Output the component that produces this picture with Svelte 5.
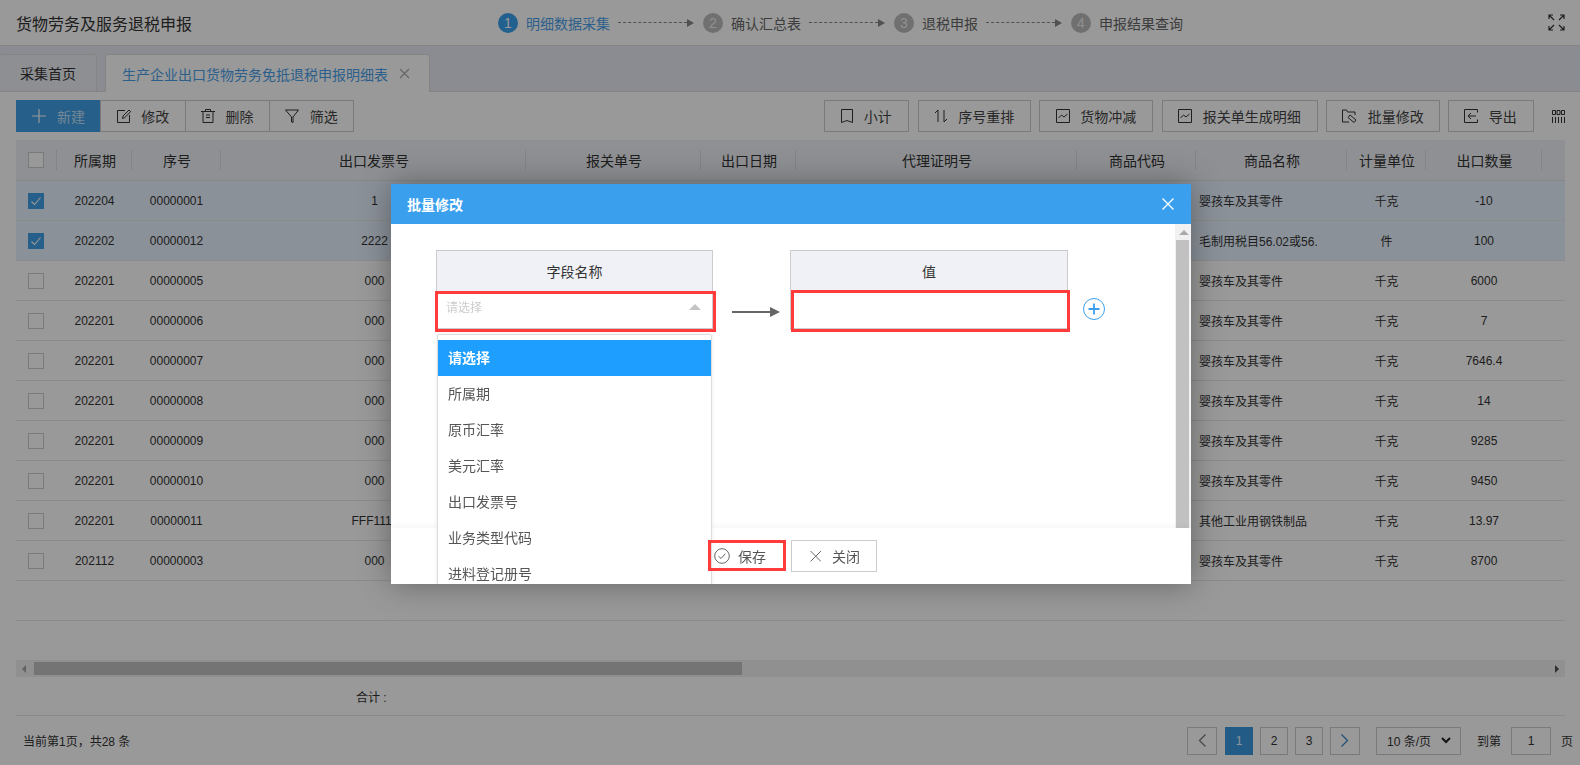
<script>
  const cols = [
    { t: '所属期' }, { t: '序号' }, { t: '出口发票号' }, { t: '报关单号' }, { t: '出口日期' },
    { t: '代理证明号' }, { t: '商品代码' }, { t: '商品名称' }, { t: '计量单位' }, { t: '出口数量' }, { t: '' }
  ];
  const rows = [
    ['202204', '00000001', '1', '婴孩车及其零件', '千克', '-10', true],
    ['202202', '00000012', '2222', '毛制用税目56.02或56.', '件', '100', true],
    ['202201', '00000005', '000', '婴孩车及其零件', '千克', '6000', false],
    ['202201', '00000006', '000', '婴孩车及其零件', '千克', '7', false],
    ['202201', '00000007', '000', '婴孩车及其零件', '千克', '7646.4', false],
    ['202201', '00000008', '000', '婴孩车及其零件', '千克', '14', false],
    ['202201', '00000009', '000', '婴孩车及其零件', '千克', '9285', false],
    ['202201', '00000010', '000', '婴孩车及其零件', '千克', '9450', false],
    ['202201', '00000011', 'FFF1111', '其他工业用钢铁制品', '千克', '13.97', false],
    ['202112', '00000003', '000', '婴孩车及其零件', '千克', '8700', false]
  ];
  const steps = [
    { n: 1, t: '明细数据采集', line: 66, on: true },
    { n: 2, t: '确认汇总表', line: 66 },
    { n: 3, t: '退税申报', line: 66 },
    { n: 4, t: '申报结果查询' }
  ];
  const options = ['所属期', '原币汇率', '美元汇率', '出口发票号', '业务类型代码', '进料登记册号'];
</script>

<div class="page">
  <header class="top">
    <div class="title">货物劳务及服务退税申报</div>
    <div class="steps">
      {#each steps as s}
        <span class="num" class:on={s.on}>{s.n}</span>
        <span class="stxt" class:on={s.on}>{s.t}</span>
        {#if s.line}
          <span class="dash"></span><span class="tri"></span>
        {/if}
      {/each}
    </div>
    <svg class="full" width="17" height="17" viewBox="0 0 17 17" fill="none" stroke="#333" stroke-width="1.2">
      <path d="M1 5V1h4M1 1l5 5M12 1h4v4M16 1l-5 5M1 12v4h4M1 16l5-5M16 12v4h-4M16 16l-5-5" />
    </svg>
  </header>

  <nav class="tabs">
    <div class="tab first">采集首页</div>
    <div class="tab active">生产企业出口货物劳务免抵退税申报明细表
      <svg class="tabx" width="11" height="11" viewBox="0 0 11 11" stroke="#aaa" stroke-width="1.2"><path d="M1 1l9 9M10 1l-9 9" /></svg>
    </div>
  </nav>

  <div class="toolbar">
    <div class="group">
      <button class="btn seg primary">
        <svg width="14" height="14" viewBox="0 0 14 14" stroke="#fff" stroke-width="1.2"><path d="M7 0v14M0 7h14" /></svg>
        新建
      </button>
      <button class="btn seg">
        <svg width="14" height="14" viewBox="0 0 14 14" fill="none" stroke="#333"><path d="M8 1.500H.5v12h12V6M5.500 9.500l.6-2.600L12 1l1.700 1.700-6 5.900z" /></svg>
        修改
      </button>
      <button class="btn seg">
        <svg width="14" height="14" viewBox="0 0 14 14" fill="none" stroke="#333"><path d="M0 2.500h14M4.500 2.500V.5h5v2M2 2.500v11h10v-11M5 6h4M5 8.500h4" /></svg>
        删除
      </button>
      <button class="btn seg">
        <svg width="14" height="14" viewBox="0 0 14 14" fill="none" stroke="#333"><path d="M.5 1h13L8 8v5.500L6.500 13V8z" /></svg>
        筛选
      </button>
    </div>
    <div class="group right">
      <button class="btn w85">
        <svg width="12" height="14" viewBox="0 0 12 14" fill="none" stroke="#333"><path d="M.5.5h11v13L6 11.500l-5.500 2z" /></svg>
        小计
      </button>
      <button class="btn w113">
        <svg width="14" height="14" viewBox="0 0 14 14" fill="none" stroke="#333"><path d="M1 4l3-3v12M10 1v12l3-3" /></svg>
        序号重排
      </button>
      <button class="btn w114">
        <svg width="14" height="14" viewBox="0 0 14 14" fill="none" stroke="#333"><path d="M.5.5h13v13H.5zM2.500 9l3-3 2.500 2 3.500-3" /></svg>
        货物冲减
      </button>
      <button class="btn w156">
        <svg width="14" height="14" viewBox="0 0 14 14" fill="none" stroke="#333"><path d="M.5.5h13v13H.5zM2.500 9l3-3 2.500 2 3.500-3" /></svg>
        报关单生成明细
      </button>
      <button class="btn w114">
        <svg width="15" height="14" viewBox="0 0 15 14" fill="none" stroke="#333"><path d="M7 13H.5V1h4l1 2H13v3M8 6l6 5-2 2.500-6-5z" /></svg>
        批量修改
      </button>
      <button class="btn w86 last">
        <svg width="14" height="14" viewBox="0 0 14 14" fill="none" stroke="#333"><path d="M13.500 3.500v-3H.5v13h13v-3M12 7H4M7 4L4 7l3 3" /></svg>
        导出
      </button>
      <svg class="gridi" width="13" height="13" viewBox="0 0 13 13" fill="none" stroke="#333"><path d="M.5.5h3v4h-3zM5 .5h3v4H5zM9.500.5h3v4h-3zM.5 7v6M3.500 7v6M6.500 7v6M9.500 7v6M12.500 7v6" /></svg>
    </div>
  </div>

  <div class="tablewrap">
    <div class="thead grid">
      <div class="cell chk"><span class="box"></span></div>
      {#each cols as c}
        <div class="cell">{c.t}</div>
      {/each}
    </div>
    {#each rows as r}
      <div class="grid row" class:sel={r[6]}>
        <div class="cell chk">
          <span class="box" class:checked={r[6]}>
            {#if r[6]}
              <svg width="12" height="12" viewBox="0 0 12 12" fill="none" stroke="#fff" stroke-width="1.1"><path d="M1.500 6.500l3 3 6-7" /></svg>
            {/if}
          </span>
        </div>
        <div class="cell">{r[0]}</div>
        <div class="cell">{r[1]}</div>
        <div class="cell shift">{r[2]}</div>
        <div class="cell"></div>
        <div class="cell"></div>
        <div class="cell"></div>
        <div class="cell"></div>
        <div class="cell left">{r[3]}</div>
        <div class="cell">{r[4]}</div>
        <div class="cell">{r[5]}</div>
        <div class="cell"></div>
      </div>
    {/each}
    <div class="grid row empty"></div>
    <div class="hscroll">
      <span class="harrow l"></span>
      <span class="hthumb"></span>
      <span class="harrow r"></span>
    </div>
    <div class="sum">合计 :</div>
  </div>

  <footer class="pager">
    <div class="count">当前第1页，共28 条</div>
    <div class="pg">
      <button class="pbtn nav"><svg width="8" height="13" viewBox="0 0 8 13" fill="none" stroke="#777" stroke-width="1.3"><path d="M7.500 .5L1.500 6.500l6 6" /></svg></button>
      <button class="pbtn cur">1</button>
      <button class="pbtn">2</button>
      <button class="pbtn">3</button>
      <button class="pbtn nav"><svg width="8" height="13" viewBox="0 0 8 13" fill="none" stroke="#3f83c9" stroke-width="1.3"><path d="M.5 .5l6 6-6 6" /></svg></button>
      <div class="sel10">10 条/页
        <svg width="10" height="7" viewBox="0 0 10 7" fill="none" stroke="#222" stroke-width="2"><path d="M1 1l4 4 4-4" /></svg>
      </div>
      <span class="goto">到第</span>
      <div class="pinput">1</div>
      <span class="pageword">页</span>
    </div>
  </footer>
</div>

<div class="mask"></div>

<section class="modal">
  <div class="mhead">
    <span>批量修改</span>
    <svg width="12" height="12" viewBox="0 0 12 12" stroke="#fff" stroke-width="1.3"><path d="M.5.5l11 11M11.500.5l-11 11" /></svg>
  </div>
  <div class="mbody">
    <div class="form">
      <div class="fcol c1">
        <div class="fhead">字段名称</div>
        <div class="fcell placeholder">请选择<span class="up"></span></div>
      </div>
      <svg class="arrow" width="48" height="10" viewBox="0 0 48 10"><path d="M0 4h38v2H0z" fill="#666" /><path d="M38 0l10 5-10 5z" fill="#666" /></svg>
      <div class="fcol c2">
        <div class="fhead">值</div>
        <div class="fcell"></div>
      </div>
      <svg class="plus" width="24" height="24" viewBox="0 0 24 24" fill="none" stroke="#3aa0ee"><circle cx="12" cy="12" r="10.500" /><path d="M6.500 12h11M12 6.500v11" stroke-width="1.800" /></svg>
    </div>
    <div class="vscroll">
      <span class="vup"></span>
      <span class="vthumb"></span>
    </div>
  </div>
  <div class="mfoot">
    <button class="fbtn save">
      <svg width="16" height="16" viewBox="0 0 16 16" fill="none" stroke="#666"><circle cx="8" cy="8" r="7.300" /><path d="M4.500 8.200l2.500 2.300 4.300-4.800" /></svg>
      保存
    </button>
    <button class="fbtn close">
      <svg width="13" height="13" viewBox="0 0 13 13" stroke="#666"><path d="M2.500 1l10.500 10.500M13 1L2.500 11.500" /></svg>
      关闭
    </button>
  </div>

  <div class="menu">
    <div class="opt hot">请选择</div>
    {#each options as o}
      <div class="opt">{o}</div>
    {/each}
  </div>
  <span class="mark m1"></span>
  <span class="mark m2"></span>
  <span class="mark m3"></span>
</section>

<style>
  :global(body) {
    margin: 0;
    overflow: hidden;
    font-family: "Liberation Sans", "Noto Sans CJK SC", sans-serif;
    color: #333;
    background: #fff;
  }
  button { font: inherit; color: inherit; }
  .page {
    width: 1580px;
    height: 765px;
    overflow: hidden;
    display: flex;
    flex-direction: column;
    background: #fff;
  }
  .top {
    height: 45px;
    flex: none;
    border-bottom: 1px solid #ddd;
    display: flex;
    align-items: center;
    padding: 0 16px;
  }
  .title { font-size: 16px; width: 482px; flex: none; }
  .steps { display: flex; align-items: center; font-size: 14px; flex: 1; color: #666; }
  .num {
    width: 20px; height: 20px; border-radius: 50%; background: #bbb; color: #eee;
    display: flex; align-items: center; justify-content: center; font-size: 14px; margin-right: 8px;
  }
  .num.on { background: #3aa0ee; color: #fff; }
  .stxt.on { color: #4a9fe8; }
  .dash { width: 69px; border-top: 1px dashed #888; margin-left: 8px; }
  .tri {
    width: 0; height: 0; border-left: 7px solid #888;
    border-top: 4px solid transparent; border-bottom: 4px solid transparent; margin-right: 9px;
  }
  .full { margin-right: -1px; }
  .tabs {
    height: 46px; flex: none; background: #e8eaf2; display: flex; align-items: flex-end;
    border-bottom: 1px solid #ddd; box-sizing: border-box; gap: 8px; font-size: 14px;
  }
  .tab {
    height: 38px; display: flex; align-items: center; box-sizing: border-box;
    border: 1px solid #ddd; border-bottom: none; border-radius: 3px 3px 0 0;
  }
  .tab.first { width: 97px; justify-content: center; border-left: none; background: #eceef4; height: 37px; }
  .tab.active { width: 325px; background: #fff; color: #4a9fe8; padding-left: 16px; height: 38px; margin-bottom: -1px; }
  .tabx { margin-left: 11px; }
  .toolbar {
    height: 32px; flex: none; margin: 8px 15px 8px 16px; display: flex; justify-content: space-between;
  }
  .group { display: flex; }
  .group.right { gap: 8.500px; align-items: center; }
  .btn {
    height: 32px; background: #fff; border: 1px solid #ccc; box-sizing: border-box; font-size: 14px;
    display: flex; align-items: center; justify-content: center; gap: 10.500px; padding: 0; color: #444;
  }
  .seg { width: 85.300px; margin-right: -1px; }
  .primary { background: #3f9fe6; border-color: #3f9fe6; color: #bfe0f8; }
  .w85 { width: 85px; } .w113 { width: 113px; } .w114 { width: 114px; } .w156 { width: 156px; } .w86 { width: 86px; }
  .last { margin-right: 1px; margin-left: -1px; }
  .gridi { margin-left: 9px; }
  .tablewrap { margin: 0 15px 0 16px; flex: none; height: 576px; }
  .grid {
    display: grid;
    grid-template-columns: 41px 75px 89px 305px 175px 95px 281px 119px 151px 79px 116px 23px;
  }
  .thead {
    height: 41px; background: #eef0f6; border-bottom: 1px solid #e2e2e2; box-sizing: border-box;
    font-size: 14px; align-items: center;
  }
  .thead .cell { height: 20px; border-right: 1px solid #ddd; box-sizing: border-box; padding-left: 2px; }
  .thead .cell:last-child { border-right: none; }
  .thead .cell.chk { padding-left: 12px; }
  .cell { display: flex; align-items: center; justify-content: center; min-width: 0; white-space: nowrap; overflow: hidden; }
  .cell.shift { padding-left: 2px; }
  .cell.left { justify-content: flex-start; padding-left: 3px; }
  .chk { justify-content: flex-start; padding-left: 12px; }
  .box {
    width: 16px; height: 16px; box-sizing: border-box; border: 1px solid #ccc; background: #fff;
    display: flex; align-items: center; justify-content: center;
  }
  .box.checked { background: #3f9fe6; border-color: #3f9fe6; }
  .row { height: 40px; font-size: 12px; border-bottom: 1px solid #e8e8e8; box-sizing: border-box; }
  .row.sel { background: #e8f2ff; }
  .hscroll {
    margin-top: 39px; height: 17px; background: #f1f1f1; display: flex; align-items: center;
    padding: 0 3px; box-sizing: border-box;
  }
  .hthumb { width: 708px; height: 13px; background: #c1c1c1; margin-left: 8px; }
  .harrow { width: 0; height: 0; border-top: 4px solid transparent; border-bottom: 4px solid transparent; }
  .harrow.l { border-right: 4px solid #a3a3a3; margin-left: 3px; }
  .harrow.r { border-left: 4px solid #505050; margin-left: auto; margin-right: 3px; }
  .sum {
    height: 39px; font-size: 12px; border-bottom: 1px solid #e4e4e4; box-sizing: border-box;
    padding-left: 340px; display: flex; align-items: center;
  }
  .pager {
    margin: 0 15px 0 23px; height: 48px; display: flex; align-items: center; justify-content: space-between;
    font-size: 12px; padding-top: 1px; box-sizing: border-box;
  }
  .pg { display: flex; align-items: center; font-size: 12px; margin-right: -10px; width: 388px; }
  .pbtn {
    width: 28px; height: 28px; border: 1px solid #ccc; background: #fff; box-sizing: border-box; padding: 0;
    display: flex; align-items: center; justify-content: center; margin-right: 7px;
  }
  .pbtn.nav { width: 30px; }
  .pbtn.cur { background: #3a9ae0; border-color: #3a9ae0; color: #eaf5ff; }
  .pbtn.nav:first-child { margin-right: 8px; }
  .sel10 {
    width: 85px; height: 28px; border: 1px solid #ccc; box-sizing: border-box; margin-left: 9px;
    display: flex; align-items: center; justify-content: space-between; padding: 0 9px 0 10px; font-size: 12px;
  }
  .goto { margin-left: 16px; width: 34px; }
  .pinput {
    width: 40px; height: 28px; border: 1px solid #ccc; box-sizing: border-box;
    display: flex; align-items: center; justify-content: center;
  }
  .pageword { margin-left: 10px; }
  .mask { position: fixed; inset: 0; background: rgba(0, 0, 0, .4); }
  .modal {
    position: absolute; left: 391px; top: 184px; width: 800px; height: 400px; background: #fff;
    box-shadow: 0 0 30px rgba(0, 0, 0, .35); display: flex; flex-direction: column; overflow: hidden;
  }
  .mhead {
    height: 40px; flex: none; background: #3aa0ee; color: #fff; font-size: 14px; font-weight: 700;
    display: flex; align-items: center; justify-content: space-between; padding: 0 17px 0 16px;
  }
  .mbody { flex: 1; display: flex; min-height: 0; }
  .form { flex: 1; display: flex; align-items: flex-start; padding: 26px 0 0 45px; }
  .fcol { box-sizing: border-box; border: 1px solid #ccc; border-bottom: 2px solid #ccc; }
  .c1 { width: 277px; } .c2 { width: 278px; }
  .fhead {
    height: 40px; background: #f0f1f6; display: flex; align-items: center; justify-content: center; font-size: 14px;
  }
  .fcell { height: 37px; box-sizing: border-box; position: relative; }
  .placeholder { font-size: 12px; color: #ccc; padding: 7px 9px; }
  .up {
    position: absolute; right: 11px; top: 13px; width: 0; height: 0;
    border-left: 6px solid transparent; border-right: 6px solid transparent; border-bottom: 6px solid #c4c4c4;
  }
  .arrow { margin: 57px 10px 0 19px; flex: none; }
  .plus { margin: 47px 0 0 14px; flex: none; }
  .vscroll {
    width: 16px; flex: none; background: #f1f1f1; display: flex; flex-direction: column; align-items: flex-start;
  }
  .vup {
    margin: 6px 0 5px 2px; width: 0; height: 0; border-left: 5px solid transparent; border-right: 5px solid transparent;
    border-bottom: 5px solid #aaa; align-self: center;
  }
  .vthumb { flex: 1; width: 13px; background: #c1c1c1; margin-left: 1px; }
  .mfoot {
    height: 56px; flex: none; background: #fff; box-shadow: 0 -2px 6px rgba(0, 0, 0, .04); position: relative;
    display: flex; align-items: flex-start; padding: 12px 0 0 317px; box-sizing: border-box; gap: 5px;
  }
  .fbtn {
    height: 32px; background: #fff; border: 1px solid #ccc; box-sizing: border-box; font-size: 14px; color: #555;
    display: flex; align-items: center; justify-content: center; padding: 0;
  }
  .save { width: 78px; gap: 8px; border: none; justify-content: flex-start; padding-left: 6px; }
  .close { width: 86px; gap: 11px; }
  .menu {
    position: absolute; left: 46px; top: 150px; width: 275px; box-sizing: border-box; background: #fff;
    border: 1px solid #ddd; border-radius: 2px; padding-top: 5px; box-shadow: 0 0 4px rgba(0,0,0,.08); font-size: 14px; color: #555;
  }
  .opt { height: 36px; display: flex; align-items: center; padding: 0 0 2px 10px; box-sizing: border-box; }
  .opt.hot { background: #1e9fff; color: #fff; font-weight: 700; }
  .mark { position: absolute; box-sizing: border-box; border: 3px solid #ff3b3b; }
  .m1 { left: 44px; top: 107px; width: 281px; height: 41px; }
  .m2 { left: 400px; top: 106px; width: 279px; height: 42px; }
  .m3 { left: 317px; top: 356px; width: 78px; height: 31px; }
</style>
